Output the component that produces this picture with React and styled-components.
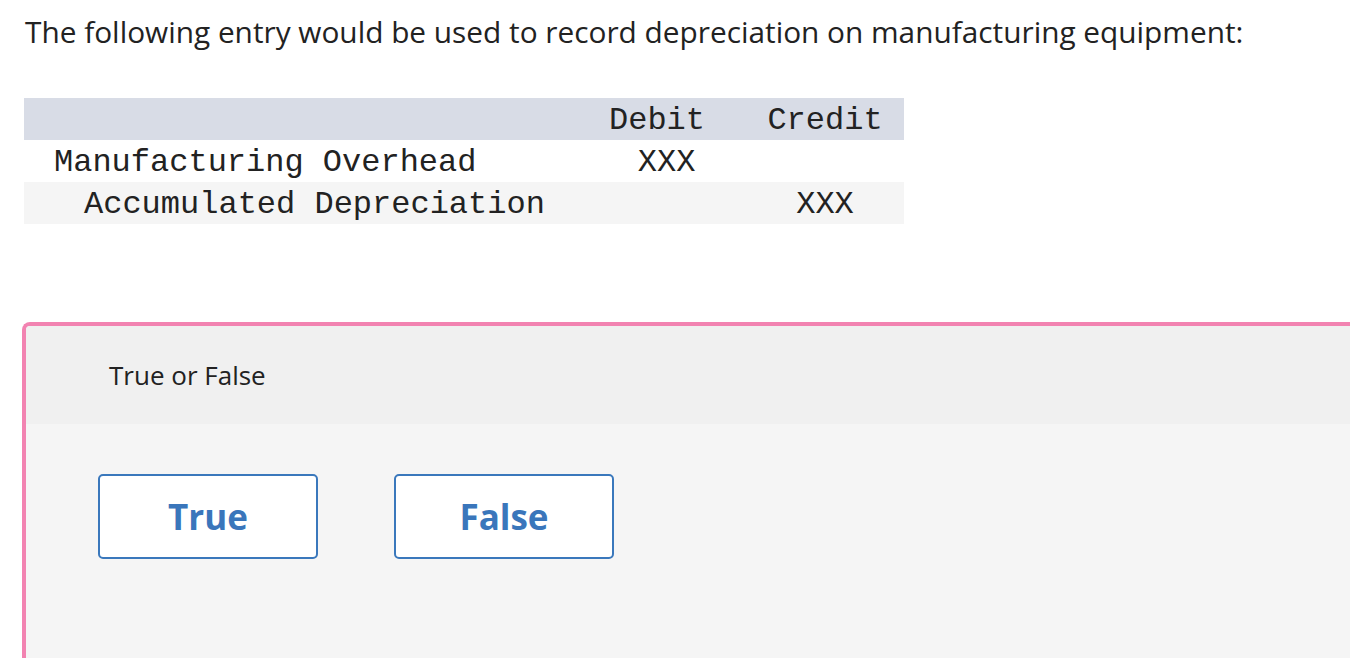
import React from "react";
import styled, { createGlobalStyle } from "styled-components";

const Global = createGlobalStyle`
  html, body { margin: 0; padding: 0; background: #ffffff; }
  body { font-family: "Open Sans", "Noto Sans", Arial, sans-serif; color: #222; overflow: hidden; }
`;

const Page = styled.div`
  width: 1350px;
  height: 658px;
  overflow: hidden;
  display: flex;
  flex-direction: column;
`;

const Prompt = styled.p`
  margin: 0;
  padding: 14px 0 0 25px;
  font-size: 29.8px;
  line-height: 36px;
  color: #222;
`;

const Journal = styled.div`
  margin: 48px 0 0 24px;
  width: 880px;
  display: grid;
  grid-template-columns: 1fr 178px 158px;
  font-family: "Liberation Mono", "Courier New", monospace;
  font-size: 32px;
  color: #222;
`;

const Row = styled.div`
  display: contents;
`;

const Cell = styled.div`
  height: 42px;
  line-height: 42px;
  padding-top: 2px;
  box-sizing: border-box;
  white-space: pre;
  background: ${(p) => p.$bg};
  padding-left: ${(p) => p.$indent || 0}px;
  text-align: ${(p) => p.$align || "left"};
`;

const Card = styled.section`
  margin: 98px 0 0 22px;
  flex: 1;
  border-top: 4px solid #f283b1;
  border-left: 4px solid #f283b1;
  border-top-left-radius: 8px;
  background: #f5f5f5;
  display: flex;
  flex-direction: column;
  overflow: hidden;
`;

const CardHeader = styled.div`
  height: 98px;
  background: #f0f0f0;
  display: flex;
  align-items: center;
  padding-left: 83px;
  font-size: 26px;
  color: #222;
`;

const Choices = styled.div`
  display: flex;
  gap: 76px;
  padding: 50px 0 0 72px;
`;

const Choice = styled.button`
  width: 220px;
  height: 85px;
  box-sizing: border-box;
  background: #fff;
  border: 2px solid #3a78bc;
  border-radius: 5px;
  color: #3a76bb;
  font-family: "Open Sans", "Noto Sans", Arial, sans-serif;
  font-weight: 700;
  font-size: 35px;
  cursor: pointer;
  display: flex;
  align-items: center;
  justify-content: center;
  padding: 0;
`;

const rows = [
  { bg: "#d8dce6", cells: [["", 0], ["Debit", 0], ["Credit", 0]] },
  { bg: "#ffffff", cells: [["Manufacturing Overhead", 30], [" XXX", 0], ["", 0]] },
  { bg: "#f5f5f5", cells: [["Accumulated Depreciation", 60], ["", 0], ["XXX", 0]] },
];

export default function App() {
  return (
    <Page>
      <Global />
      <Prompt>The following entry would be used to record depreciation on manufacturing equipment:</Prompt>
      <Journal>
        {rows.map((r, i) => (
          <Row key={i}>
            {r.cells.map(([t, ind], j) => (
              <Cell key={j} $bg={r.bg} $indent={ind} $align={j === 0 ? "left" : "center"}>
                {t}
              </Cell>
            ))}
          </Row>
        ))}
      </Journal>
      <Card>
        <CardHeader>True or False</CardHeader>
        <Choices>
          <Choice>True</Choice>
          <Choice>False</Choice>
        </Choices>
      </Card>
    </Page>
  );
}
